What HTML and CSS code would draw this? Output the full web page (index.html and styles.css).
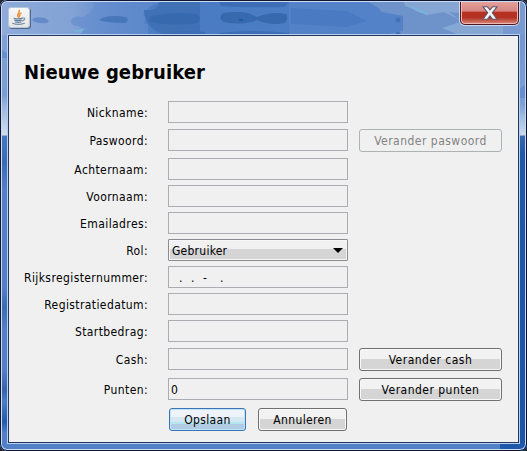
FILE: index.html
```html
<!DOCTYPE html>
<html lang="nl">
<head>
<meta charset="utf-8">
<title>Nieuwe gebruiker</title>
<link rel="stylesheet" href="styles.css">
</head>
<body>
<div class="window">
  <svg class="glass" width="527" height="451" viewBox="0 0 527 451" aria-hidden="true">
    <defs>
      <linearGradient id="bar" x1="0" x2="1" y1="0" y2="0">
        <stop offset="0" stop-color="#8eabda"/><stop offset=".14" stop-color="#82a2d5"/>
        <stop offset=".22" stop-color="#5c88cb"/><stop offset=".3" stop-color="#4a7bc2"/>
        <stop offset=".74" stop-color="#4d7fc6"/><stop offset=".78" stop-color="#6c93cc"/>
        <stop offset="1" stop-color="#7a9bd0"/>
      </linearGradient>
      <linearGradient id="left" x1="0" x2="0" y1="0" y2="1">
        <stop offset="0" stop-color="#82a2d6"/><stop offset=".21" stop-color="#799ed5"/>
        <stop offset=".24" stop-color="#9db9df"/><stop offset=".299" stop-color="#d4deed"/>
        <stop offset=".302" stop-color="#4577bf"/><stop offset=".36" stop-color="#3b6bb3"/>
        <stop offset=".42" stop-color="#5280c8"/><stop offset=".64" stop-color="#5280c8"/>
        <stop offset=".68" stop-color="#3b6bb0"/><stop offset=".73" stop-color="#5280c8"/>
        <stop offset=".82" stop-color="#5280c8"/><stop offset=".865" stop-color="#3463aa"/>
        <stop offset=".89" stop-color="#4c7cc4"/><stop offset=".935" stop-color="#235aa9"/>
        <stop offset=".96" stop-color="#5280c8"/><stop offset="1" stop-color="#5280c8"/>
      </linearGradient>
      <linearGradient id="right" x1="0" x2="0" y1="0" y2="1">
        <stop offset="0" stop-color="#7093cb"/><stop offset=".23" stop-color="#7d9fd4"/>
        <stop offset=".26" stop-color="#9fbfe3"/><stop offset=".299" stop-color="#ccd9ec"/>
        <stop offset=".302" stop-color="#3768b0"/><stop offset=".34" stop-color="#2059a8"/>
        <stop offset="1" stop-color="#1c55a6"/>
      </linearGradient>
    </defs>
    <rect width="527" height="451" fill="#5381c8"/>
    <rect width="9" height="451" fill="url(#left)"/>
    <rect x="518" width="9" height="451" fill="url(#right)"/>
    <rect y="443" x="500" width="27" height="8" fill="#1f58a8"/>
    <rect width="527" height="35" fill="url(#bar)"/>
    <path d="M71 20Q74 15 84 17Q100 5 92 2H160Q146 8 143 14Q148 19 143 24H148V35H78Q87 30 78 26Q70 26 71 20Z" fill="#648ece" opacity=".65"/>
    <path d="M32 20Q34 16 45 18Q51 21 47 23Q36 24 32 20Z" fill="#648bc8"/>
    <path d="M99 20Q107 14 126 17Q130 20 125 23Q106 23 99 20Z" fill="#4776b9"/>
    <path d="M144 10Q160 11 159 2H200V35H165Q144 28 144 10Z" fill="#4171b5"/>
    <path d="M151 16Q175 11 197 14Q203 18 197 23Q170 27 148 21Z" fill="#3669ad"/>
    <path d="M223 13Q238 11 248 13L257 17Q272 11 286 14Q289 18 285 23Q270 26 257 20Q244 26 224 22Q217 18 223 13Z" fill="#3669ae"/>
    <path d="M219 2H289L284 7Q250 8 221 6ZM219 33Q252 29 289 33V35H219ZM235 3H246Q242 6 235 3ZM169 33Q184 29 205 32V35H170Z" fill="#3d6eb5"/>
    <path d="M238 19h5v2h-3z" fill="#1c5aa9"/>
    <path d="M289 2H403V35H289Z" fill="#5482c8"/>
    <path d="M291 8L347 11L367 21L347 27L291 24Z" fill="#4a7bc2"/>
    <path d="M384 35L403 31V16L382 12Q377 6 368 2H460V35Z" fill="#6e93cb"/>
    <path d="M404 2H460V13L449 12L460 20L444 12L427 15L405 6Z" fill="#86a6d4"/>
    <path d="M442 28L460 22H503V35H459Z" fill="#86a6d4"/>
    <path d="M404 3L411 6L427 12V15L416 11ZM442 28L455 26L448 29ZM73 31L85 28L81 33Z" fill="#78b1d9"/>
    <circle cx="398" cy="20" r="2.4" fill="#4472b4"/><path d="M395 34q3-5 6 0z" fill="#4472b4"/>
    <path d="M2 50L7 53V58H2ZM519 89L525 85V98H519Z" fill="#658fce"/>
  </svg>
  <header class="titlebar">
    <div class="java">
      <svg width="20" height="19" viewBox="0 0 20 19" aria-hidden="true">
        <g fill="none" stroke-linecap="round">
          <path d="M10.2 2.5C11.5 4.7 7 5.6 9.3 9M12 5.2C9.5 6.5 11.5 7.4 10 9" stroke="#eb8c32" stroke-width="1.5"/>
          <path d="M5 10.2Q9 11.4 13.5 10.2M5.7 12.1Q9 13.1 12.6 12.1M6.4 14Q9 14.8 12 14" stroke="#60809f" stroke-width="1.2"/>
          <path d="M14 10Q16.7 9.6 15.5 11.5L13.4 13M3.5 15.2Q9 17.6 15.5 15.2" stroke="#7891ab" stroke-width="1.1"/>
        </g>
      </svg>
    </div>
    <div class="close">
      <svg width="16" height="14" viewBox="0 0 16 14" aria-hidden="true">
        <path d="M1 .8H5.5L8 3.8L10.5.8H15L10.3 6.8L15 13.2H10.5L8 10L5.5 13.2H1L5.7 6.8Z" fill="#f4f4f4" stroke="#60586b" stroke-width="1.1"/>
      </svg>
    </div>
  </header>
  <main class="content">
    <h1>Nieuwe gebruiker</h1>
    <div class="form">
      <label>Nickname:</label><div class="field"></div><span></span>
      <label>Paswoord:</label><div class="field"></div><button class="btn" disabled>Verander paswoord</button>
      <label>Achternaam:</label><div class="field"></div><span></span>
      <label>Voornaam:</label><div class="field"></div><span></span>
      <label>Emailadres:</label><div class="field"></div><span></span>
      <label>Rol:</label><div class="field select"><span>Gebruiker</span><i class="arrow"></i></div><span></span>
      <label>Rijksregisternummer:</label><div class="field mask"><span>.</span><span>.</span><span>-</span><span>.</span></div><span></span>
      <label>Registratiedatum:</label><div class="field"></div><span></span>
      <label>Startbedrag:</label><div class="field"></div><span></span>
      <label>Cash:</label><div class="field"></div><button class="btn">Verander cash</button>
      <label>Punten:</label><div class="field">0</div><button class="btn">Verander punten</button>
    </div>
    <div class="actions">
      <button class="btn primary">Opslaan</button>
      <button class="btn cancel">Annuleren</button>
    </div>
  </main>
</div>
</body>
</html>
```
FILE: styles.css
```css
* { box-sizing: border-box; }
body {
  margin: 0;
  background: #25272e;
  font: 12px/14px "DejaVu Sans Condensed", "DejaVu Sans", sans-serif;
  font-stretch: condensed;
  color: #000;
  overflow: hidden;
}
.window {
  position: relative;
  width: 527px;
  height: 451px;
  padding: 0 8px;
  border-radius: 7px;
  overflow: hidden;
}
.window::after {
  content: "";
  position: absolute;
  inset: 0;
  border: 1px solid #0d1530;
  border-radius: 7px;
  box-shadow: inset 0 0 0 1px #cbdcf2;
  pointer-events: none;
}
.glass { position: absolute; top: 0; left: 0; }
.titlebar {
  position: relative;
  height: 35px;
  padding: 1px 0 0 1px;
  display: flex;
  justify-content: space-between;
}
.java {
  width: 20px;
  height: 19px;
  margin-top: 7px;
  border-radius: 2px;
  background: linear-gradient(#f8f8f8, #e6e6e6);
  box-shadow: 0 0 0 1px #b8c4d8, 1px 1px 0 1px #53698c;
}
.java svg, .close svg { display: block; }
.close {
  width: 59px;
  height: 24px;
  display: flex;
  align-items: center;
  justify-content: center;
  border: 1px solid #4d1620;
  border-top: 0;
  border-radius: 0 0 5px 5px;
  background: linear-gradient(#e6a39e, #d58580 45%, #b93020 47%, #b33223 72%, #d98a7c);
  box-shadow: inset 0 0 0 1px #efb9b2, 0 0 0 1px #c9d8ee;
}
.content {
  position: relative;
  height: 408px;
  border: 1px solid #24365f;
  box-shadow: 0 0 0 1px #b5d0ee;
  background: #f0f0f0;
  padding: 24px 0 0 15px;
}
h1 {
  margin: 0;
  height: 41px;
  font-size: 20px;
  line-height: 24px;
  font-weight: bold;
  letter-spacing: .08px;
  white-space: nowrap;
}
.form {
  display: grid;
  grid-template-columns: 124px 200px 174px;
  grid-template-rows: 28px 29px 27px 27px 27px 27px 27px 27px 28px 30px 30px;
  align-items: start;
}
label {
  padding-top: 5px;
  text-align: right;
  letter-spacing: .4px;
  white-space: nowrap;
}
.field {
  width: 180px;
  height: 22px;
  margin-left: 20px;
  border: 1px solid #abadb3;
  padding: 4px 3px 0 2px;
}
.form > .btn { margin-left: 31px; width: 143px; }
.form > .btn { margin-left: 11px; letter-spacing: .48px; }
.select {
  display: flex;
  justify-content: space-between;
  border-color: #8b8c90;
  border-radius: 1px;
  background: linear-gradient(#f1f1f1 9px, #d5d5d5 9px);
  box-shadow: inset 0 0 0 1px #f7f7f7;
  padding-left: 3px;
  letter-spacing: .25px;
}
.arrow {
  width: 10px;
  height: 5px;
  margin: 4px 1px 0 0;
  background: #000;
  clip-path: polygon(0 0, 100% 0, 50% 100%);
}
.mask { display: flex; padding-left: 10px; }
.mask span { width: 12px; }
.mask span:nth-child(3) { width: 17px; }
.btn {
  display: block;
  height: 23px;
  border: 1px solid #707070;
  border-radius: 3px;
  padding: 0;
  background: linear-gradient(#f2f2f2 10px, #d5d5d5 10px);
  box-shadow: inset 0 0 0 1px #f8f8f8;
  color: #000;
  font: inherit;
  letter-spacing: .35px;
  text-align: center;
  white-space: nowrap;
}
.btn:disabled { background: #f0f0f0; border-color: #adb2b5; color: #838383; box-shadow: none; }
.actions { display: flex; gap: 12px; padding-left: 145px; }
.primary {
  width: 77px;
  border-color: #3c73b5;
  background: linear-gradient(#edf3f8 8px, #d6e7f4 8px, #d6e7f4 13px, #b4e7f2 13px, #b4e7f2 15px, #b3cce5 15px);
  box-shadow: inset 0 0 0 1px #bde5f5;
}
.cancel { width: 89px; }
```
